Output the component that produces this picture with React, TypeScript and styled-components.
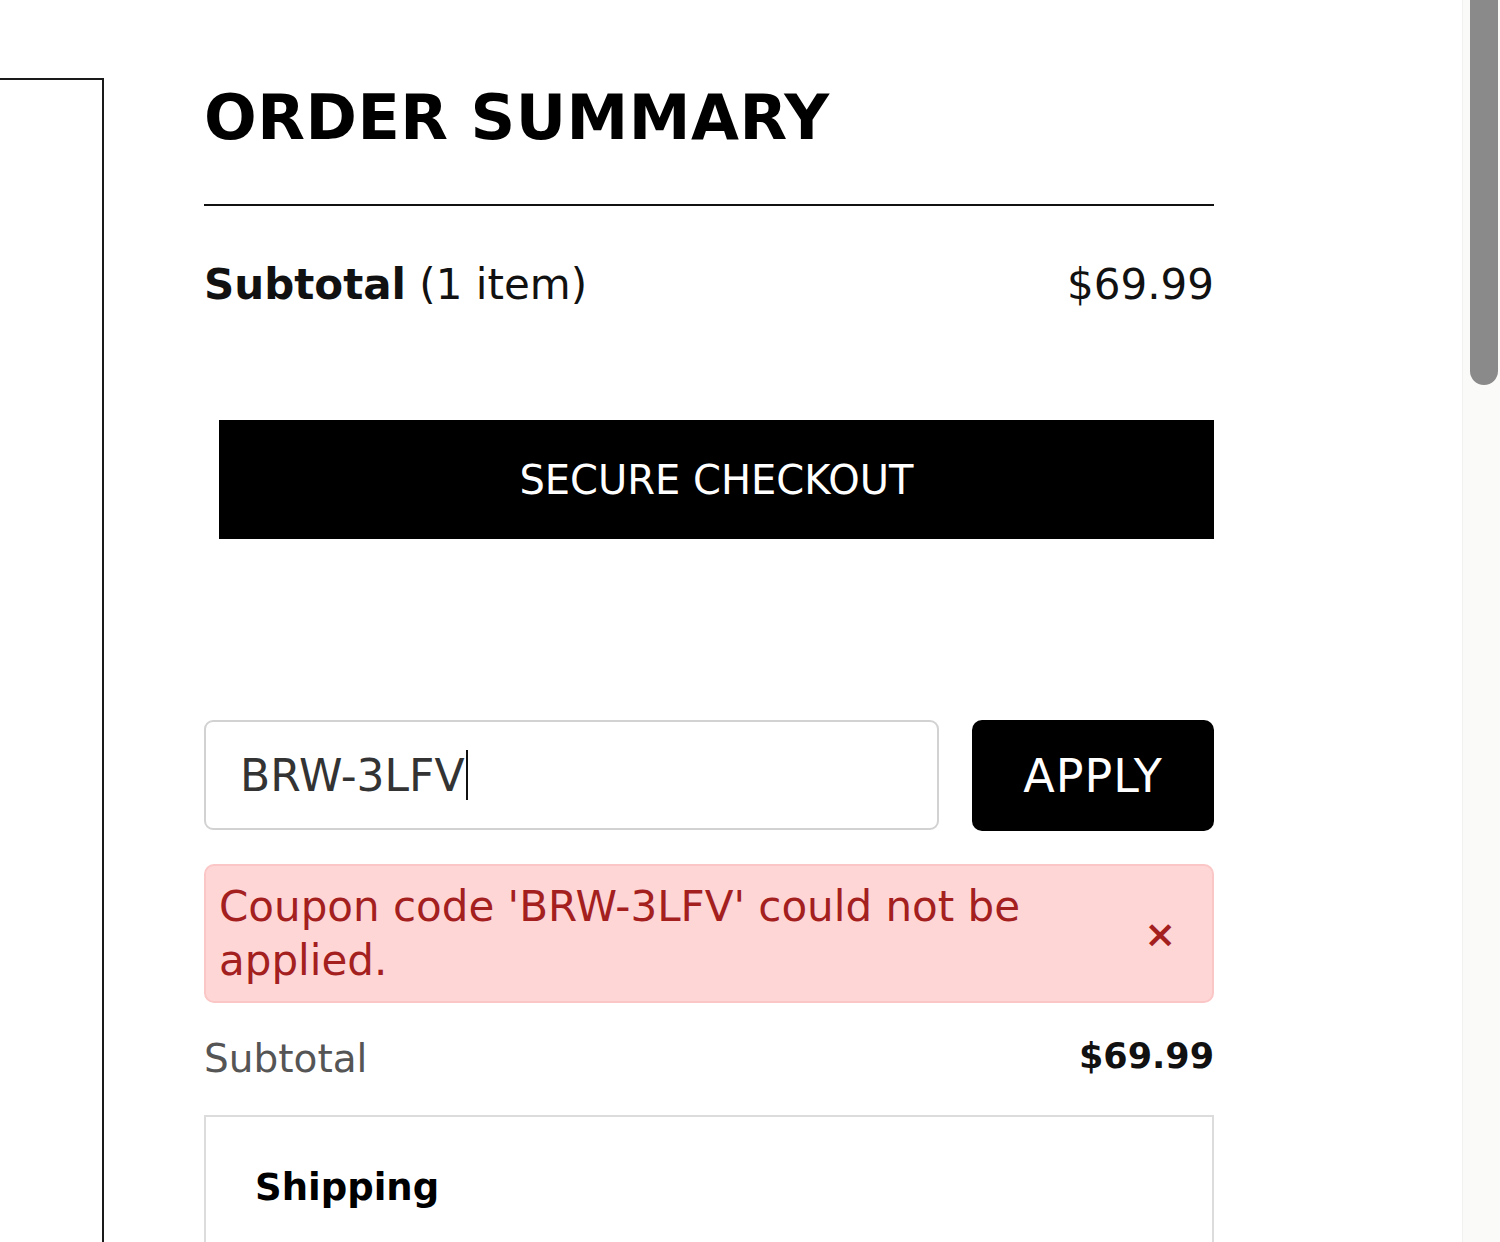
import React from "react";
import styled, { createGlobalStyle } from "styled-components";

const Global = createGlobalStyle`
  html, body { margin: 0; padding: 0; background: #ffffff; overflow: hidden; }
  body { font-family: "DejaVu Sans", "Noto Sans", sans-serif; color: #000; }
  * { box-sizing: border-box; }
`;

const Page = styled.div`
  display: flex;
  align-items: flex-start;
  width: 1500px;
  height: 1242px;
  overflow: hidden;
`;

const LeftPanel = styled.div`
  flex: 0 0 104px;
  height: 1300px;
  margin-top: 78px;
  border-top: 2px solid #1a1a1a;
  border-right: 2px solid #1a1a1a;
`;

const Summary = styled.section`
  flex: 0 0 1010px;
  margin-left: 100px;
  display: flex;
  flex-direction: column;
`;

const Title = styled.h1`
  margin: 0;
  padding-top: 82px;
  font-size: 62px;
  line-height: 72px;
  font-weight: 700;
  letter-spacing: 0.5px;
  color: #000;
`;

const Divider = styled.hr`
  margin: 50px 0 0;
  border: 0;
  height: 2px;
  background: #111;
`;

const Row = styled.div<{ $top: number }>`
  display: flex;
  justify-content: space-between;
  align-items: baseline;
  margin-top: ${(p) => p.$top}px;
`;

const Label = styled.span<{ $size: number; $color?: string }>`
  font-size: ${(p) => p.$size}px;
  color: ${(p) => p.$color || "#111"};
`;

const Strong = styled.strong`
  font-weight: 700;
`;

const Amount = styled.span<{ $size: number; $bold?: boolean; $lift?: number }>`
  font-size: ${(p) => p.$size}px;
  font-weight: ${(p) => (p.$bold ? 700 : 400)};
  color: #111;
  position: relative;
  top: ${(p) => -(p.$lift || 0)}px;
`;

const CheckoutButton = styled.button`
  margin: 111px 0 0 15px;
  height: 119px;
  width: 995px;
  border: 0;
  background: #000;
  color: #fff;
  font-family: inherit;
  font-size: 40px;
  letter-spacing: 0;
  cursor: pointer;
`;

const CouponRow = styled.div`
  display: flex;
  gap: 33px;
  margin-top: 181px;
`;

const CouponInput = styled.div`
  flex: 0 0 735px;
  height: 110px;
  border: 2px solid #d2d2d2;
  border-radius: 9px;
  display: flex;
  align-items: center;
  padding-left: 34px;
  font-size: 44px;
  color: #333;
`;

const Caret = styled.span`
  display: inline-block;
  width: 2px;
  height: 50px;
  background: #111;
  margin-left: 1px;
`;

const ApplyButton = styled.button`
  flex: 0 0 242px;
  height: 111px;
  border: 0;
  border-radius: 10px;
  background: #000;
  color: #fff;
  font-family: inherit;
  font-size: 46px;
  letter-spacing: 1px;
  cursor: pointer;
`;

const Alert = styled.div`
  margin-top: 33px;
  min-height: 139px;
  background: #ffd6d6;
  border: 2px solid #fbc6c6;
  border-radius: 10px;
  display: flex;
  align-items: center;
  justify-content: space-between;
  padding: 12px 36px 12px 13px;
  color: #a3201f;
`;

const AlertText = styled.p`
  margin: 0;
  width: 880px;
  font-size: 42px;
  line-height: 54px;
`;

const Close = styled.span`
  font-size: 38px;
  font-weight: 700;
  color: #a3201f;
`;

const ShippingBox = styled.div`
  margin-top: 34px;
  height: 200px;
  border: 2px solid #dcdcdc;
  padding: 49px 0 0 49px;
`;

const ShippingTitle = styled.h3`
  margin: 0;
  font-size: 37px;
  font-weight: 700;
  color: #000;
`;

const ScrollTrack = styled.div`
  position: fixed;
  top: 0;
  right: 0;
  width: 38px;
  height: 1242px;
  background: #fafaf8;
  border-left: 1px solid #f1f1ef;
`;

const ScrollThumb = styled.div`
  position: absolute;
  top: -20px;
  left: 7px;
  width: 28px;
  height: 405px;
  border-radius: 14px;
  background: #8a8a8a;
`;

export default function App() {
  return (
    <>
      <Global />
      <Page>
        <LeftPanel />
        <Summary>
          <Title>ORDER SUMMARY</Title>
          <Divider />
          <Row $top={54}>
            <Label $size={42}>
              <Strong>Subtotal</Strong> (1 item)
            </Label>
            <Amount $size={42}>$69.99</Amount>
          </Row>
          <CheckoutButton>SECURE CHECKOUT</CheckoutButton>
          <CouponRow>
            <CouponInput>
              BRW-3LFV
              <Caret />
            </CouponInput>
            <ApplyButton>APPLY</ApplyButton>
          </CouponRow>
          <Alert>
            <AlertText>Coupon code 'BRW-3LFV' could not be applied.</AlertText>
            <Close>×</Close>
          </Alert>
          <Row $top={33}>
            <Label $size={39} $color="#555">
              Subtotal
            </Label>
            <Amount $size={35} $bold $lift={4}>
              $69.99
            </Amount>
          </Row>
          <ShippingBox>
            <ShippingTitle>Shipping</ShippingTitle>
          </ShippingBox>
        </Summary>
      </Page>
      <ScrollTrack>
        <ScrollThumb />
      </ScrollTrack>
    </>
  );
}
